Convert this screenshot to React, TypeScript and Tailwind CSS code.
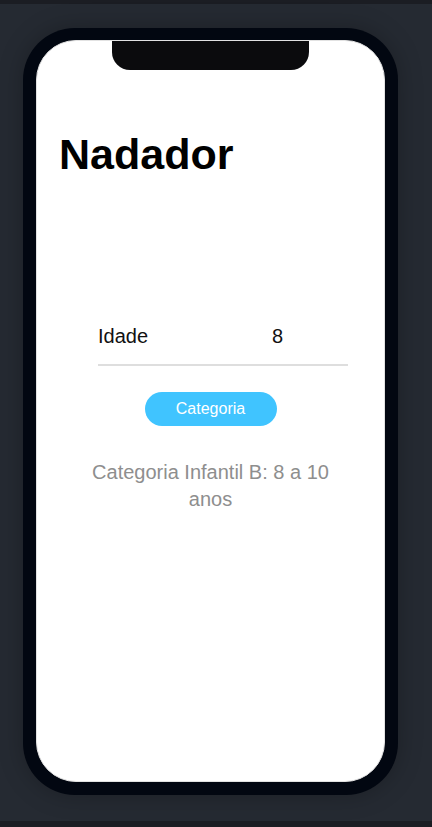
import { useState } from 'react';

function categoria(idade: number) {
  if (idade >= 6 && idade <= 7) return 'Categoria Infantil A: 6 a 7 anos';
  if (idade >= 8 && idade <= 10) return 'Categoria Infantil B: 8 a 10 anos';
  if (idade >= 11 && idade <= 13) return 'Categoria Juvenil A: 11 a 13 anos';
  if (idade >= 14 && idade <= 17) return 'Categoria Juvenil B: 14 a 17 anos';
  return 'Categoria Adulto: maiores de 18 anos';
}

export default function App() {
  const [idade, setIdade] = useState('8');
  const [resultado, setResultado] = useState(categoria(8));

  return (
    <div
      className="min-h-screen flex flex-col bg-[#252a32]"
      style={{ fontFamily: '"Liberation Sans", Arial, sans-serif' }}
    >
      <div className="h-[4px] bg-[#1b1d23]" />

      <div className="flex-1 pl-[23px] pt-[24px]">
        {/* CELULAR */}
        <div className="w-[375px] h-[767px] rounded-[52px] bg-[#020711] px-[13px] pt-[12px] pb-[13px] shadow-[0_0_24px_rgba(0,0,0,0.25)]">
          <div className="relative h-full bg-white rounded-[40px] border border-[#e2e2e2] overflow-hidden">
            {/* notch */}
            <div className="absolute left-[75px] top-0 w-[197px] h-[29px] bg-[#0b0b0d] rounded-b-[18px]" />

            <div className="flex flex-col pt-[92px]">
              <h1 className="pl-[22px] text-[43px] font-bold leading-none text-black">
                Nadador
              </h1>

              {/* FORM */}
              <div className="ml-[61px] mt-[145px] w-[250px] flex items-center border-b-2 border-[#dedede] pb-[13px] text-[20px] text-[#111]">
                <label className="w-[174px]">Idade</label>
                <input
                  type="text"
                  value={idade}
                  onChange={(e) => setIdade(e.target.value)}
                  className="flex-1 min-w-0 bg-transparent outline-none"
                />
              </div>

              <button
                onClick={() => setResultado(categoria(Number(idade)))}
                className="self-center mt-[26px] w-[132px] h-[34px] rounded-full bg-[#40c4ff] text-white text-[16px]"
              >
                Categoria
              </button>

              <p className="self-center mt-[33px] w-[250px] text-center text-[20px] leading-[27px] text-[#8e8e8e]">
                {resultado}
              </p>
            </div>
          </div>
        </div>
      </div>

      <div className="h-[6px] bg-[#1b1d23]" />
    </div>
  );
}
